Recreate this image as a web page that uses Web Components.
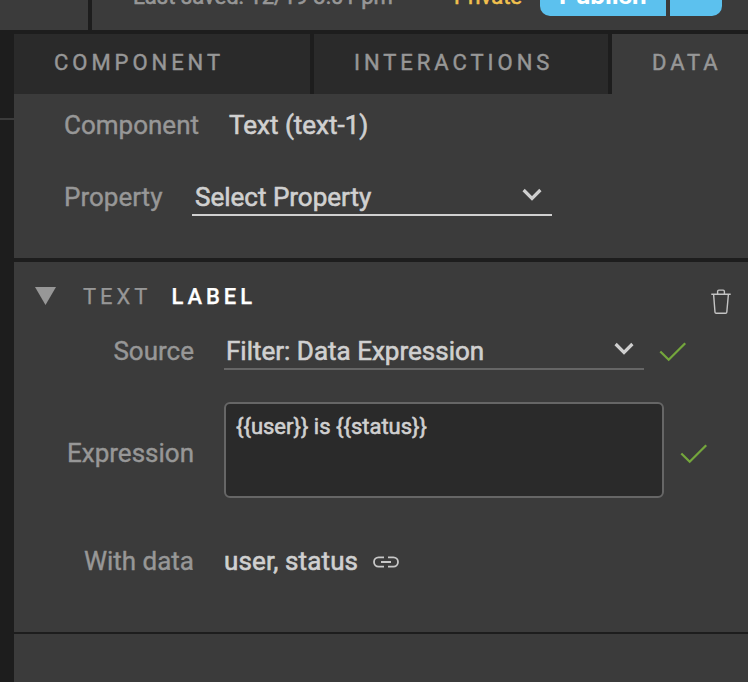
<!DOCTYPE html>
<html lang="en">
<head>
<meta charset="utf-8">
<title>Data panel</title>
<style>
html, body { margin: 0; height: 100%; overflow: hidden; background: #1d1d1d; }
body { font-family: Roboto, "Liberation Sans", sans-serif; font-size: 26px; color: #d0d0d0; -webkit-text-stroke: .6px; }
</style>
</head>
<body>
<data-editor></data-editor>
<script>
const define = (name, html) => customElements.define(name, class extends HTMLElement {
  constructor() {
    super();
    this.attachShadow({ mode: 'open' }).innerHTML = html;
  }
});

define('icon-chevron', `<style>:host{display:block;width:22px;height:16px}svg{display:block}</style>
<svg width="22" height="16" viewBox="0 0 22 16"><path d="M2.6 3 11 11.4 19.4 3" fill="none" stroke="#cfcfcf" stroke-width="3.2"/></svg>`);

define('icon-check', `<style>:host{display:block;width:28px;height:22px}svg{display:block}</style>
<svg width="28" height="22" viewBox="0 0 28 22"><path d="M1.3 10.5 9.7 18.7 26.2 2.2" fill="none" stroke="#74a63c" stroke-width="2.3"/></svg>`);

define('icon-trash', `<style>:host{display:block;width:20px;height:26px}svg{display:block}</style>
<svg width="20" height="26" viewBox="0 0 20 26" fill="none" stroke="#c4c4c4" stroke-width="1.4"><path d="M.3 5.2H19.7M6.6 5V2.4Q6.6 1.1 7.9 1.1H12.1Q13.4 1.1 13.4 2.4V5M2.6 5.4 4 23.2Q4.1 24.3 5.2 24.3H14.6Q15.7 24.3 15.8 23.2L17.4 5.4"/></svg>`);

define('icon-link', `<style>:host{display:block;width:26px;height:12px}svg{display:block}</style>
<svg width="26" height="12" viewBox="0 0 26 12" fill="none" stroke="#c8c8c8" stroke-width="1.8"><path d="M11 1.4H5.6a4.6 4.6 0 0 0 0 9.2H11M15 1.4h5.4a4.6 4.6 0 0 1 0 9.2H15M8 6H18"/></svg>`);

define('top-bar', `<style>
:host{display:flex;gap:4px;height:30px;overflow:hidden;font-size:22px;line-height:30px}
.side{width:88px;background:#3b3b3b}
.main{flex:1;display:flex;background:#3b3b3b;padding-left:41px;height:30px}
.text{margin-top:-18px;color:#979797;width:321px;white-space:nowrap}
.private{margin-top:-18px;color:#f2c14e;width:86px;white-space:nowrap}
.publish{height:16px;width:126px;background:#5cc1ee;border-radius:0 0 0 10px;color:#fff;font-weight:700;font-size:26px;margin-right:4px;-webkit-text-stroke:0}
.publish span{display:block;margin:-20px 0 0 19px}
.more{width:52px;height:16px;background:#5cc1ee;border-radius:0 0 10px 0}
</style><div class="side"></div><div class="main"><div class="text">Last saved: 12/19 3:01 pm</div><div class="private">Private</div><div class="publish"><span>Publish</span></div><div class="more"></div></div>`);

define('panel-tab', `<style>
:host{display:block;box-sizing:border-box;height:60px;padding:14px 0 0 40px;background:#2a2a2a;color:#979797;font-size:22px;line-height:30px;letter-spacing:3.96px;white-space:nowrap;overflow:hidden;-webkit-text-stroke:.45px}
:host([active]){background:#3b3b3b}
</style><slot></slot>`);

define('select-field', `<style>
:host{display:flex;box-sizing:border-box;justify-content:space-between;height:36px;padding-left:3px;line-height:30px;border-bottom:2px solid var(--line,#d0d0d0);white-space:nowrap}
icon-chevron{margin:5px 9px 0 0}
</style><slot></slot><icon-chevron></icon-chevron>`);

define('field-label', `<style>:host{display:block;color:#979797;line-height:30px;white-space:nowrap;-webkit-text-stroke:.4px}</style><slot></slot>`);

define('expression-box', `<style>
:host{display:block;box-sizing:border-box;width:440px;height:96px;border:2px solid #666;border-radius:6px;background:#2a2a2a;padding:8px 10px;font-size:22px;line-height:30px;white-space:nowrap}
</style><slot></slot>`);

define('component-summary', `<style>
:host{display:block;box-sizing:border-box;height:164px;padding:16px 0 0 50px;background:#3b3b3b}
.row{display:flex;height:72px}
.value{margin-left:30px;line-height:30px}
.name{width:128px}
select-field{width:360px;height:34px}
</style>
<div class="row"><field-label>Component</field-label><div class="value">Text (text-1)</div></div>
<div class="row"><field-label class="name">Property</field-label><select-field>Select Property</select-field></div>`);

define('binding-section', `<style>
:host{display:block;box-sizing:border-box;height:370px;background:#3b3b3b;padding-top:20px}
.head{display:flex;height:54px;font-size:22px;line-height:30px;letter-spacing:3.96px;color:#979797;-webkit-text-stroke:.25px}
.arrow{width:21px;height:18px;margin:5px 27px 0 21px;background:#979797;clip-path:polygon(0 0,100% 0,50% 100%)}
.head b{font-weight:500;color:#fff;margin-left:20px}
icon-trash{margin:7px 17px 0 auto}
.row{display:grid;grid-template-columns:180px auto auto;column-gap:30px;justify-content:start}
.row field-label{text-align:right}
.source{height:66px}
.source select-field{width:420px;height:34px;padding-left:2px;--line:#666}
.source icon-check{margin:5px 0 0 -15px}
.expr{height:144px}
.expr field-label{margin-top:36px}
.expr icon-check{margin:41px 0 0 -14px}
.data{line-height:30px}
.data div{letter-spacing:.12px}
.data icon-link{margin:10px 0 0 -15px}
</style>
<div class="head"><span class="arrow"></span><span>TEXT</span><b>LABEL</b><icon-trash></icon-trash></div>
<div class="row source"><field-label>Source</field-label><select-field>Filter: Data Expression</select-field><icon-check></icon-check></div>
<div class="row expr"><field-label>Expression</field-label><expression-box>{{user}} is {{status}}</expression-box><icon-check></icon-check></div>
<div class="row data"><field-label>With data</field-label><div>user, status</div><icon-link></icon-link></div>`);

define('data-editor', `<style>
:host{display:flex;flex-direction:column;gap:4px;width:748px;height:682px;overflow:hidden}
.body{display:flex;flex:1}
.rail{width:14px;box-sizing:border-box;padding-top:84px}
.rail i{display:block;height:2px;background:#3b3b3b}
.panel{flex:1;display:flex;flex-direction:column}
.tabs{display:grid;grid-template-columns:296px 294px 1fr;column-gap:4px;height:60px}
binding-section{margin:4px 0 2px}
.rest{flex:1;background:#3b3b3b}
</style>
<top-bar></top-bar>
<div class="body"><div class="rail"><i></i></div><div class="panel">
<div class="tabs"><panel-tab>COMPONENT</panel-tab><panel-tab>INTERACTIONS</panel-tab><panel-tab active>DATA</panel-tab></div>
<component-summary></component-summary><binding-section></binding-section><div class="rest"></div></div></div>`);
</script>
</body>
</html>
